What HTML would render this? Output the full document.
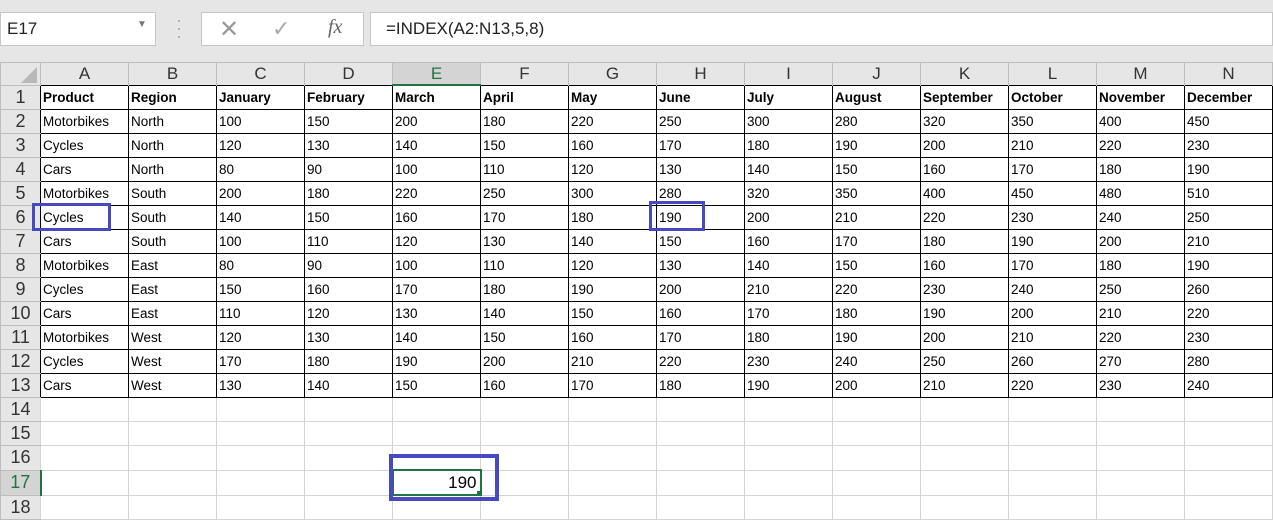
<!DOCTYPE html>
<html><head><meta charset="utf-8"><style>
body{margin:0;width:1273px;height:505px;overflow:hidden;background:#fff;font-family:"Liberation Sans",sans-serif;position:relative}
.top{position:absolute;left:0;top:0;width:1273px;height:62px;background:#e6e6e6}
.box{position:absolute;background:#fff;border:1px solid #c6c6c6;box-sizing:border-box}
table{position:absolute;left:0;top:62px;border-collapse:collapse;table-layout:fixed}
td{border:1px solid #d4d4d4;height:23px;padding:0 0 0 2px;font-size:13.5px;white-space:nowrap;overflow:hidden;color:#000}
tr.h td{background:#e6e6e6;color:#333;font-size:17px;text-align:center;height:21px;border:1px solid #bdbdbd;border-bottom:none;padding:0}
td.r{background:#e6e6e6;color:#333;font-size:18px;text-align:center;border:1px solid #bdbdbd;border-right:none;padding:0}
td.d{border:1px solid #000}
tr.b td.d{font-weight:bold}
.hl{position:absolute;border:3px solid #4848c0;box-sizing:border-box}
</style></head><body>
<div class="top"></div>
<div class="box" style="left:0;top:12px;width:156px;height:34px;font-size:17px;padding:6px 0 0 6px;color:#222">E17<span style="position:absolute;left:136px;top:6px;font-size:10px;color:#777">▼</span></div>
<div style="position:absolute;left:176px;top:16px;color:#aaa;font-size:18px;line-height:8px">·<br>·<br>·</div>
<div class="box" style="left:201px;top:12px;width:163px;height:34px">
<span style="position:absolute;left:17px;top:2px;font-size:24px;color:#999">✕</span>
<span style="position:absolute;left:70px;top:3px;font-size:22px;color:#aaa">✓</span>
<span style="position:absolute;left:126px;top:3px;font-size:20px;font-style:italic;font-family:'Liberation Serif',serif;color:#666">fx</span></div>
<div class="box" style="left:370px;top:12px;width:903px;height:34px;font-size:17px;padding:6px 0 0 15px;color:#222">=INDEX(A2:N13,5,8)</div>
<table>
<colgroup><col style="width:40px"><col span="14" style="width:88px"></colgroup>
<tr class="h"><td style="background:#e6e6e6"><span style="display:block;width:0;height:0;border-left:16px solid transparent;border-bottom:16px solid #b8b8b8;margin:3px 0 0 20px"></span></td><td>A</td><td>B</td><td>C</td><td>D</td><td style="background:#d4d4d4;color:#217346;border-bottom:2px solid #217346">E</td><td>F</td><td>G</td><td>H</td><td>I</td><td>J</td><td>K</td><td>L</td><td>M</td><td>N</td></tr>
<tr class="b"><td class="r">1</td><td class="d">Product</td><td class="d">Region</td><td class="d">January</td><td class="d">February</td><td class="d">March</td><td class="d">April</td><td class="d">May</td><td class="d">June</td><td class="d">July</td><td class="d">August</td><td class="d">September</td><td class="d">October</td><td class="d">November</td><td class="d">December</td></tr>
<tr><td class="r">2</td><td class="d">Motorbikes</td><td class="d">North</td><td class="d">100</td><td class="d">150</td><td class="d">200</td><td class="d">180</td><td class="d">220</td><td class="d">250</td><td class="d">300</td><td class="d">280</td><td class="d">320</td><td class="d">350</td><td class="d">400</td><td class="d">450</td></tr>
<tr><td class="r">3</td><td class="d">Cycles</td><td class="d">North</td><td class="d">120</td><td class="d">130</td><td class="d">140</td><td class="d">150</td><td class="d">160</td><td class="d">170</td><td class="d">180</td><td class="d">190</td><td class="d">200</td><td class="d">210</td><td class="d">220</td><td class="d">230</td></tr>
<tr><td class="r">4</td><td class="d">Cars</td><td class="d">North</td><td class="d">80</td><td class="d">90</td><td class="d">100</td><td class="d">110</td><td class="d">120</td><td class="d">130</td><td class="d">140</td><td class="d">150</td><td class="d">160</td><td class="d">170</td><td class="d">180</td><td class="d">190</td></tr>
<tr><td class="r">5</td><td class="d">Motorbikes</td><td class="d">South</td><td class="d">200</td><td class="d">180</td><td class="d">220</td><td class="d">250</td><td class="d">300</td><td class="d">280</td><td class="d">320</td><td class="d">350</td><td class="d">400</td><td class="d">450</td><td class="d">480</td><td class="d">510</td></tr>
<tr><td class="r">6</td><td class="d">Cycles</td><td class="d">South</td><td class="d">140</td><td class="d">150</td><td class="d">160</td><td class="d">170</td><td class="d">180</td><td class="d">190</td><td class="d">200</td><td class="d">210</td><td class="d">220</td><td class="d">230</td><td class="d">240</td><td class="d">250</td></tr>
<tr><td class="r">7</td><td class="d">Cars</td><td class="d">South</td><td class="d">100</td><td class="d">110</td><td class="d">120</td><td class="d">130</td><td class="d">140</td><td class="d">150</td><td class="d">160</td><td class="d">170</td><td class="d">180</td><td class="d">190</td><td class="d">200</td><td class="d">210</td></tr>
<tr><td class="r">8</td><td class="d">Motorbikes</td><td class="d">East</td><td class="d">80</td><td class="d">90</td><td class="d">100</td><td class="d">110</td><td class="d">120</td><td class="d">130</td><td class="d">140</td><td class="d">150</td><td class="d">160</td><td class="d">170</td><td class="d">180</td><td class="d">190</td></tr>
<tr><td class="r">9</td><td class="d">Cycles</td><td class="d">East</td><td class="d">150</td><td class="d">160</td><td class="d">170</td><td class="d">180</td><td class="d">190</td><td class="d">200</td><td class="d">210</td><td class="d">220</td><td class="d">230</td><td class="d">240</td><td class="d">250</td><td class="d">260</td></tr>
<tr><td class="r">10</td><td class="d">Cars</td><td class="d">East</td><td class="d">110</td><td class="d">120</td><td class="d">130</td><td class="d">140</td><td class="d">150</td><td class="d">160</td><td class="d">170</td><td class="d">180</td><td class="d">190</td><td class="d">200</td><td class="d">210</td><td class="d">220</td></tr>
<tr><td class="r">11</td><td class="d">Motorbikes</td><td class="d">West</td><td class="d">120</td><td class="d">130</td><td class="d">140</td><td class="d">150</td><td class="d">160</td><td class="d">170</td><td class="d">180</td><td class="d">190</td><td class="d">200</td><td class="d">210</td><td class="d">220</td><td class="d">230</td></tr>
<tr><td class="r">12</td><td class="d">Cycles</td><td class="d">West</td><td class="d">170</td><td class="d">180</td><td class="d">190</td><td class="d">200</td><td class="d">210</td><td class="d">220</td><td class="d">230</td><td class="d">240</td><td class="d">250</td><td class="d">260</td><td class="d">270</td><td class="d">280</td></tr>
<tr><td class="r">13</td><td class="d">Cars</td><td class="d">West</td><td class="d">130</td><td class="d">140</td><td class="d">150</td><td class="d">160</td><td class="d">170</td><td class="d">180</td><td class="d">190</td><td class="d">200</td><td class="d">210</td><td class="d">220</td><td class="d">230</td><td class="d">240</td></tr>
<tr><td class="r">14</td><td></td><td></td><td></td><td></td><td></td><td></td><td></td><td></td><td></td><td></td><td></td><td></td><td></td><td></td></tr>
<tr><td class="r">15</td><td></td><td></td><td></td><td></td><td></td><td></td><td></td><td></td><td></td><td></td><td></td><td></td><td></td><td></td></tr>
<tr><td class="r">16</td><td></td><td></td><td></td><td></td><td></td><td></td><td></td><td></td><td></td><td></td><td></td><td></td><td></td><td></td></tr>
<tr><td class="r" style="background:#d4d4d4;color:#217346;border-right:2px solid #217346">17</td><td></td><td></td><td></td><td></td><td style="border:2px solid #217346;text-align:right;padding-right:3px;font-size:17px">190</td><td></td><td></td><td></td><td></td><td></td><td></td><td></td><td></td><td></td></tr>
<tr><td class="r">18</td><td></td><td></td><td></td><td></td><td></td><td></td><td></td><td></td><td></td><td></td><td></td><td></td><td></td><td></td></tr>
</table>
<div class="hl" style="left:32px;top:203px;width:79px;height:28px"></div>
<div class="hl" style="left:649px;top:201px;width:56px;height:30px"></div>
<div class="hl" style="left:389px;top:454px;width:110px;height:47px;border-width:4px"></div>
<div style="position:absolute;left:477px;top:491px;width:5px;height:5px;background:#217346"></div>
</body></html>
